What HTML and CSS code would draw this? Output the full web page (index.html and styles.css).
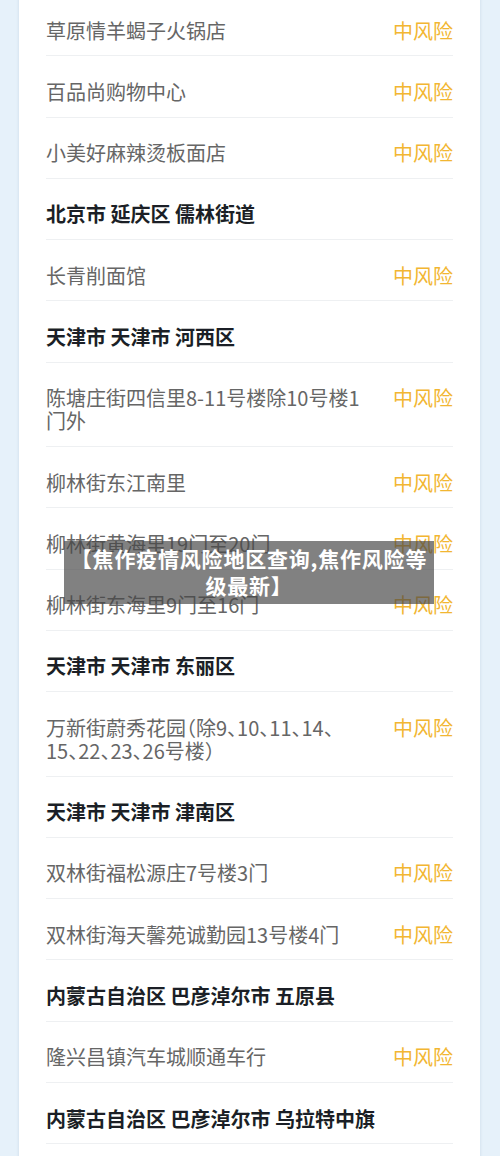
FILE: index.html
```html
<!DOCTYPE html>
<html lang="zh-CN">
<head>
    <meta charset="UTF-8">
    <meta name="viewport" content="width=device-width, initial-scale=1.0">
    <title>焦作疫情风险地区查询</title>
    <link rel="stylesheet" href="styles.css">
</head>
<body>
    <div class="page">
        <div class="risk-card">
            <div class="row"><span class="name">草原情羊蝎子火锅店</span><span class="level">中风险</span></div>
            <div class="row"><span class="name">百品尚购物中心</span><span class="level">中风险</span></div>
            <div class="row"><span class="name">小美好麻辣烫板面店</span><span class="level">中风险</span></div>
            <div class="row area">北京市 延庆区 儒林街道</div>
            <div class="row"><span class="name">长青削面馆</span><span class="level">中风险</span></div>
            <div class="row area">天津市 天津市 河西区</div>
            <div class="row"><span class="name">陈塘庄街四信里8-11号楼除10号楼1门外</span><span class="level">中风险</span></div>
            <div class="row"><span class="name">柳林街东江南里</span><span class="level">中风险</span></div>
            <div class="row"><span class="name">柳林街黄海里19门至20门</span><span class="level">中风险</span></div>
            <div class="row"><span class="name">柳林街东海里9门至16门</span><span class="level">中风险</span></div>
            <div class="row area">天津市 天津市 东丽区</div>
            <div class="row"><span class="name">万新街蔚秀花园（除9、10、11、14、15、22、23、26号楼）</span><span class="level">中风险</span></div>
            <div class="row area">天津市 天津市 津南区</div>
            <div class="row"><span class="name">双林街福松源庄7号楼3门</span><span class="level">中风险</span></div>
            <div class="row"><span class="name">双林街海天馨苑诚勤园13号楼4门</span><span class="level">中风险</span></div>
            <div class="row area">内蒙古自治区 巴彦淖尔市 五原县</div>
            <div class="row"><span class="name">隆兴昌镇汽车城顺通车行</span><span class="level">中风险</span></div>
            <div class="row area">内蒙古自治区 巴彦淖尔市 乌拉特中旗</div>
        </div>

        <!-- title overlay -->
        <div class="title-banner">【焦作疫情风险地区查询,焦作风险等级最新】</div>
    </div>
</body>
</html>
```

FILE: styles.css
```css
html, body {
    margin: 0;
    padding: 0;
}

body {
    background-color: #e6f1fa;
    font-family: "Noto Sans CJK SC", "Noto Sans", sans-serif;
    height: 1156px;
    overflow: hidden;
}

.page {
    position: relative;
    padding: 0 20px 0 19px;
}

.risk-card {
    background-color: #fff;
    margin-top: -5px;
    padding: 0 27px 40px;
    box-shadow: 0 0 3px rgba(120, 150, 180, 0.25);
}

.row {
    display: flex;
    justify-content: space-between;
    align-items: flex-start;
    padding: 23.5px 0 13.8px;
    border-bottom: 1px solid #eef0f2;
    font-size: 20px;
    line-height: 23px;
}

.name {
    color: #666;
    width: 317px;
    font-feature-settings: "halt";
}

.level {
    color: #f2b632;
    white-space: nowrap;
}

.area {
    color: #1b1f26;
    font-weight: bold;
}

/* Title Overlay */
.title-banner {
    position: absolute;
    left: 64px;
    top: 546px;
    width: 358px;
    padding: 4px 6px 5px;
    background-color: rgba(70, 70, 70, 0.68);
    color: #fff;
    font-size: 21px;
    font-weight: bold;
    letter-spacing: 0.8px;
    line-height: 27px;
    text-align: center;
}
```
